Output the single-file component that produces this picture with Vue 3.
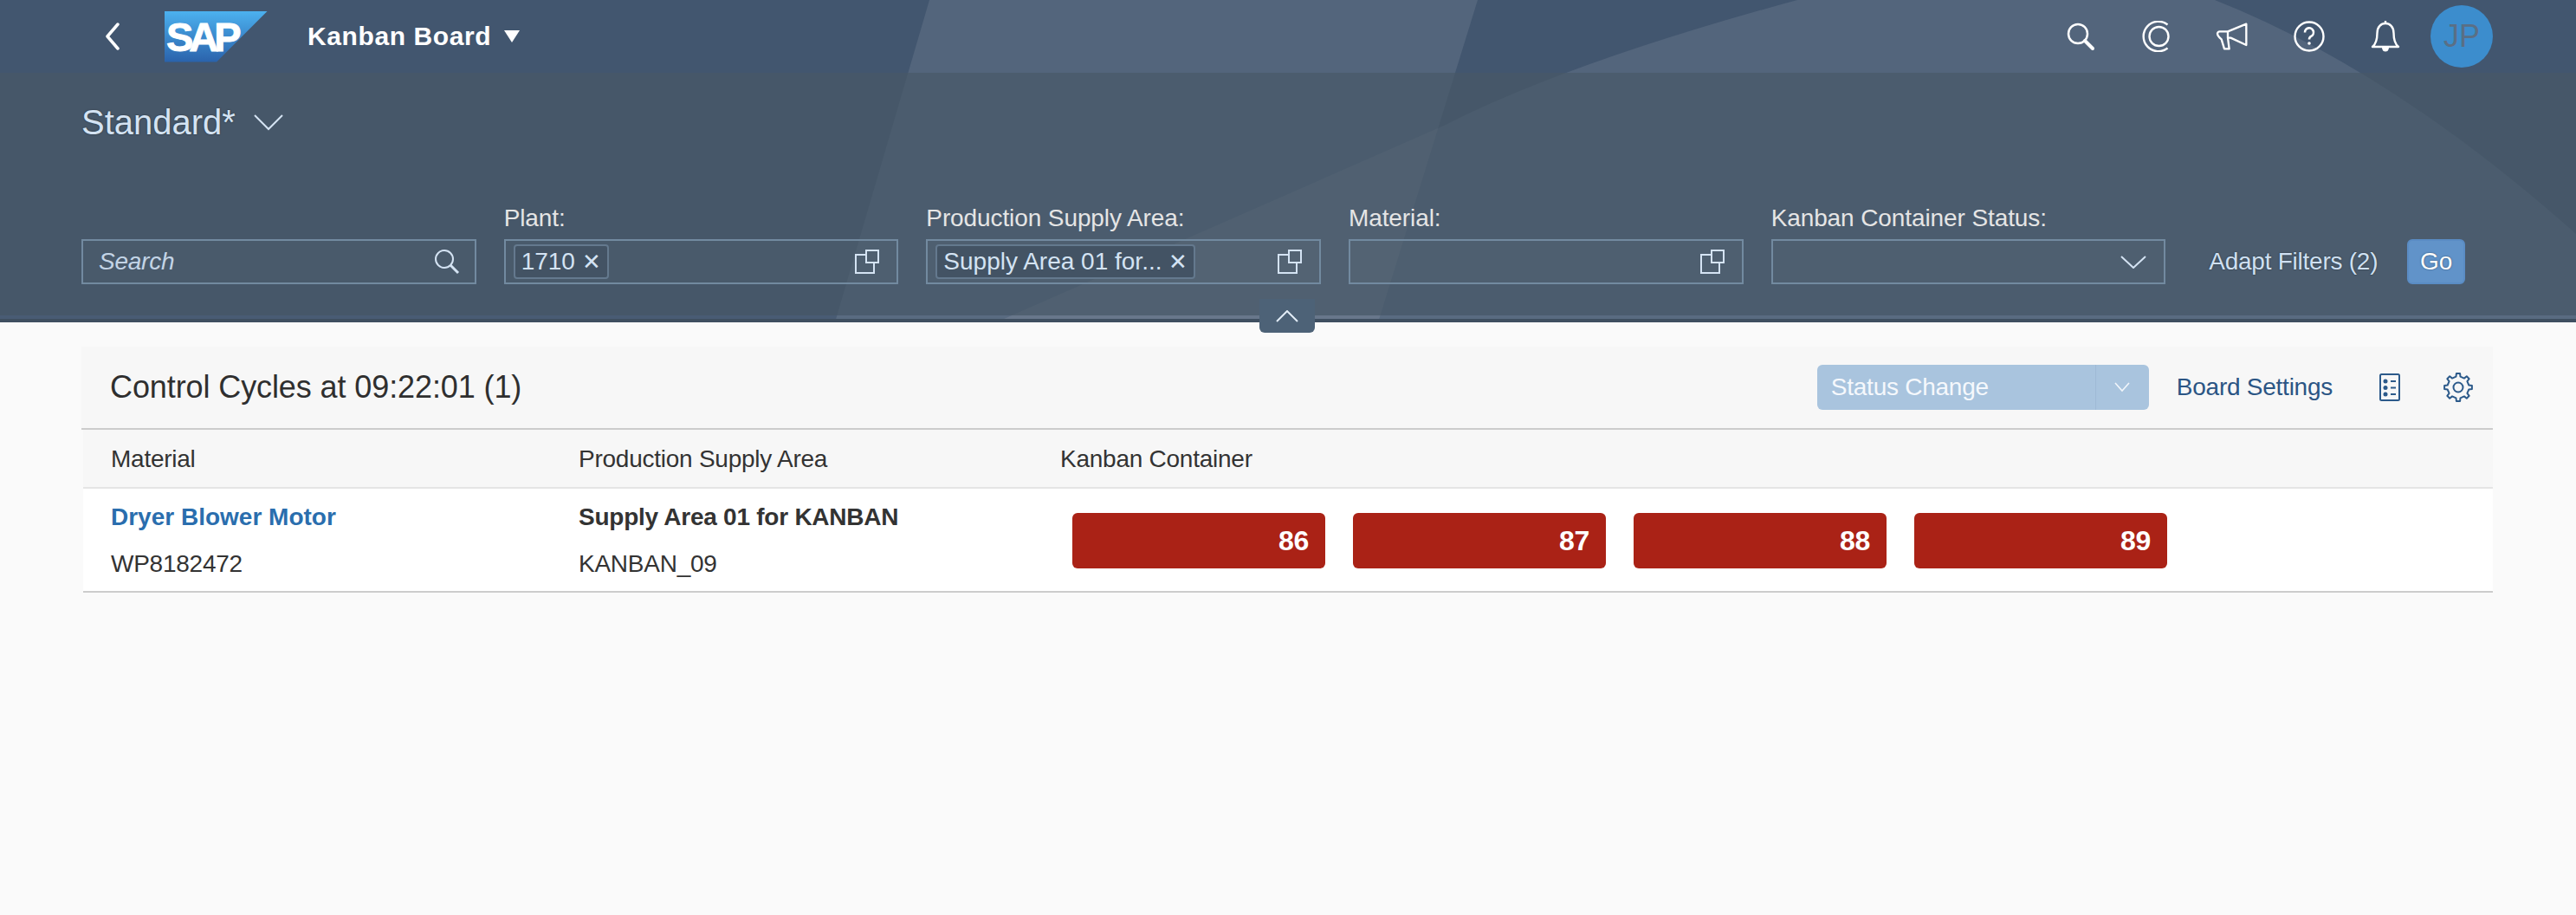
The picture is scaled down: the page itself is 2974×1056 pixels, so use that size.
<script setup>
const filters = [
  { label: 'Plant:', token: '1710' },
  { label: 'Production Supply Area:', token: 'Supply Area 01 for...' },
  { label: 'Material:', token: '' },
]

const rows = [
  {
    material: 'Dryer Blower Motor',
    materialId: 'WP8182472',
    area: 'Supply Area 01 for KANBAN',
    areaId: 'KANBAN_09',
    containers: [86, 87, 88, 89],
  },
]

// gear outline, 8 teeth
const gearPath = (() => {
  const pts = []
  for (let i = 0; i < 8; i++) {
    const a = (i * Math.PI) / 4 - Math.PI / 2
    const step = [[-0.2, 12.5], [-0.13, 16], [0.13, 16], [0.2, 12.5]]
    for (const [da, r] of step) {
      pts.push((17 + r * Math.cos(a + da)).toFixed(1) + ' ' + (17 + r * Math.sin(a + da)).toFixed(1))
    }
  }
  return 'M' + pts.join('L') + 'Z'
})()
</script>

<template>
  <div class="page">
    <header class="top">
      <svg class="deco" viewBox="0 0 2974 372" preserveAspectRatio="none" aria-hidden="true">
        <path d="M1073 0H1706L1591 372H964Z" fill="#fff" opacity="0.09" />
        <path d="M1150 372L1667 145Q1810 72 2075 0H2557Q2760 80 2974 270V372Z" fill="#fff" opacity="0.09" />
      </svg>

      <div class="shell">
        <button class="back">
          <svg width="20" height="32" viewBox="0 0 20 32"><path d="M16 2L4 16L16 30" fill="none" stroke="#fff" stroke-width="3.500" stroke-linecap="round" stroke-linejoin="round" /></svg>
        </button>
        <div class="logo"><span>SAP</span></div>
        <div class="app-title">Kanban Board</div>
        <svg class="app-caret" width="18" height="14" viewBox="0 0 18 14"><path d="M0 0H18L9 14Z" fill="#fff" /></svg>

        <div class="shell-actions">
          <button class="shell-btn">
            <svg width="36" height="36" viewBox="0 0 36 36" fill="none" stroke="#fff"><circle cx="15" cy="15" r="11" stroke-width="2.5" /><path d="M23 23L32 32" stroke-width="4" stroke-linecap="round" /></svg>
          </button>
          <button class="shell-btn">
            <svg width="40" height="36" viewBox="0 0 40 36" fill="none" stroke="#fff" stroke-width="2.4"><circle cx="22.5" cy="18" r="11" /><path d="M32.5 4.5A17.2 17.2 0 1 0 32.5 31.5" /></svg>
          </button>
          <button class="shell-btn">
            <svg width="40" height="40" viewBox="598 60 120 120" fill="none" stroke="#fff" stroke-width="7" stroke-linejoin="round"><path d="M612 103H640L704 77V150L650 125H640L645 163H628L618 130Q604 118 604 110Q606 103 612 103Z" /><path d="M640 103V125" /></svg>
          </button>
          <button class="shell-btn">
            <svg width="36" height="36" viewBox="0 0 36 36" fill="none" stroke="#fff" stroke-width="2.4"><circle cx="18" cy="18" r="16.5" /><path d="M13 13.5A5 5 0 1 1 20.2 17.8C18.6 18.6 18 19.4 18 21.5" stroke-width="2.6" /><circle cx="18" cy="26" r="1.8" fill="#fff" stroke="none" /></svg>
          </button>
          <button class="shell-btn">
            <svg width="34" height="38" viewBox="0 0 34 38" fill="none" stroke="#fff" stroke-width="2.4" stroke-linejoin="round"><path d="M2 31C7 27 7.500 21 7.500 15C7.500 8 12 4 17 4C22 4 26.500 8 26.500 15C26.500 21 27 27 32 31Z" /><path d="M17 1V4" /><path d="M13 32A4 4.500 0 0 0 21 32Z" fill="#fff" stroke="none" /></svg>
          </button>
          <button class="shell-btn">
            <span class="avatar">JP</span>
          </button>
        </div>
      </div>

      <div class="sub">
        <div class="variant">
          <span>Standard*</span>
          <svg width="34" height="20" viewBox="0 0 34 20"><path d="M1 2L17 18L33 2" fill="none" stroke="#d4e3f3" stroke-width="2" /></svg>
        </div>

        <div class="filterbar">
          <div class="field-wrap">
            <div class="field search">
              <span class="placeholder">Search</span>
              <svg width="30" height="30" viewBox="0 0 30 30" fill="none" stroke="#d4e3f3"><circle cx="12" cy="12" r="10" stroke-width="2" /><path d="M19 19L28 28" stroke-width="3" /></svg>
            </div>
          </div>

          <div v-for="f in filters" :key="f.label" class="field-wrap">
            <label>{{ f.label }}</label>
            <div class="field">
              <span v-if="f.token" class="token">{{ f.token }}<i>✕</i></span>
              <svg class="vh" width="28" height="28" viewBox="0 0 28 28" fill="none" stroke="#d4e3f3" stroke-width="2"><rect x="13" y="1" width="14" height="14" /><path d="M13 6H1V27H22V15" /></svg>
            </div>
          </div>

          <div class="field-wrap">
            <label>Kanban Container Status:</label>
            <div class="field">
              <svg class="vh" width="30" height="15" viewBox="0 0 30 15"><path d="M1 1L15 14L29 1" fill="none" stroke="#d4e3f3" stroke-width="2" /></svg>
            </div>
          </div>

          <span class="adapt">Adapt Filters (2)</span>
          <button class="go">Go</button>
        </div>
      </div>
      <div class="edge"></div>
    </header>

    <button class="collapse">
      <svg width="26" height="14" viewBox="0 0 26 14"><path d="M1 13L13 1L25 13" fill="none" stroke="#e3edf7" stroke-width="2" /></svg>
    </button>

    <main class="content">
      <div class="toolbar">
        <h2>Control Cycles at 09:22:01 (1)</h2>
        <div class="status-btn">
          <span class="status-label">Status Change</span>
          <span class="status-arrow">
            <svg width="18" height="12" viewBox="0 0 18 12"><path d="M1 1L9 10L17 1" fill="none" stroke="#f2f6fb" stroke-width="1.600" /></svg>
          </span>
        </div>
        <a class="board-settings">Board Settings</a>
        <svg class="tb-icon" width="24" height="32" viewBox="0 0 24 32" fill="none" stroke="#2c5a8a" stroke-width="2">
          <rect x="1" y="1" width="22" height="30" rx="1.500" />
          <circle cx="7" cy="9" r="2.500" fill="#2c5a8a" stroke="none" />
          <circle cx="7" cy="16.500" r="2.500" fill="#2c5a8a" stroke="none" />
          <circle cx="7" cy="24" r="2.500" fill="#2c5a8a" stroke="none" />
          <path d="M13 9H19M13 16.500H19M13 24H19" />
        </svg>
        <svg class="tb-gear" width="34" height="34" viewBox="0 0 34 34" fill="none" stroke="#2c5a8a" stroke-width="2" stroke-linejoin="round">
          <path :d="gearPath" />
          <circle cx="17" cy="17" r="5.500" />
        </svg>
      </div>

      <div class="table">
        <div class="thead">
          <div>Material</div>
          <div>Production Supply Area</div>
          <div>Kanban Container</div>
        </div>
        <div v-for="row in rows" :key="row.materialId" class="trow">
          <div class="cell">
            <a class="link">{{ row.material }}</a>
            <span>{{ row.materialId }}</span>
          </div>
          <div class="cell">
            <b>{{ row.area }}</b>
            <span>{{ row.areaId }}</span>
          </div>
          <div class="cards">
            <div v-for="c in row.containers" :key="c" class="card">{{ c }}</div>
          </div>
        </div>
      </div>
    </main>
  </div>
</template>

<style scoped>
.page {
  position: relative;
  min-height: 1056px;
  background: #fafafa;
  font-family: "Liberation Sans", Arial, sans-serif;
  font-size: 28px;
  letter-spacing: -0.25px;
  color: #333;
}

button {
  font-family: inherit;
  border: 0;
  padding: 0;
  background: none;
}

.top {
  position: relative;
  height: 372px;
  background: #42566f;
  overflow: hidden;
}

.deco {
  position: absolute;
  left: 0;
  top: 0;
  width: 100%;
  height: 100%;
}

.shell {
  position: relative;
  height: 84px;
  display: flex;
  align-items: center;
  padding: 0 88px 0 86px;
}

.back {
  width: 88px;
  height: 84px;
  display: flex;
  align-items: center;
  justify-content: center;
}

.logo {
  width: 119px;
  height: 59px;
  margin-left: 16px;
  background: linear-gradient(#4cb1ef, #2a62ab);
  clip-path: polygon(0 0, 100% 0, 50.500% 100%, 0 100%);
  color: #fff;
  font-weight: 700;
  font-size: 47px;
  letter-spacing: -5px;
  line-height: 59px;
  -webkit-text-stroke: 1px #fff;
}

.logo span {
  display: block;
  margin-left: 2px;
}

.app-title {
  margin-left: 46px;
  color: #fff;
  font-size: 30px;
  font-weight: 700;
  letter-spacing: 0.6px;
}

.app-caret {
  margin-left: 15px;
}

.shell-actions {
  margin-left: auto;
  display: flex;
}

.shell-btn {
  width: 88px;
  height: 84px;
  display: flex;
  align-items: center;
  justify-content: center;
}

.avatar {
  width: 72px;
  height: 72px;
  border-radius: 50%;
  background: #3c8dcd;
  color: #5a6f85;
  font-size: 36px;
  line-height: 72px;
  text-align: center;
}

.sub {
  position: relative;
  height: 280px;
  padding: 29px 0 0 94px;
  box-sizing: border-box;
  background: rgba(72, 89, 103, 0.68);
}

.variant {
  display: flex;
  align-items: center;
  gap: 21px;
  height: 56px;
  color: #d4e3f3;
  font-size: 40px;
  letter-spacing: 0;
  text-shadow: 0 0 2px rgba(0, 0, 0, 0.5);
}

.filterbar {
  margin-top: 66px;
  display: flex;
  align-items: flex-end;
  gap: 32px;
}

.field-wrap {
  width: 455.670px;
  flex: none;
}

label {
  display: block;
  height: 41px;
  line-height: 34px;
  letter-spacing: -0.1px;
  color: #e5e5e5;
}

.field {
  height: 52px;
  box-sizing: border-box;
  border: 2px solid #728aa0;
  background: rgba(255, 255, 255, 0.02);
  display: flex;
  align-items: center;
  padding: 0 6px 0 9px;
}

.search {
  padding: 0 17px 0 18px;
  justify-content: space-between;
}

.placeholder {
  font-style: italic;
  color: #c3d4e6;
}

.token {
  height: 40px;
  box-sizing: border-box;
  padding: 0 7px;
  border: 2px solid #64798e;
  border-radius: 4px;
  background: #435364;
  color: #d4e3f3;
  line-height: 36px;
  letter-spacing: 0;
  display: flex;
  gap: 8px;
}

.token i {
  font-style: normal;
  font-size: 26px;
}

.vh {
  margin-left: auto;
  margin-right: 14px;
}

.adapt {
  margin-left: 18px;
  margin-right: 2px;
  color: #cfe0f2;
  height: 52px;
  line-height: 52px;
  text-shadow: 0 0 2px rgba(0, 0, 0, 0.5);
}

.go {
  width: 67px;
  height: 52px;
  box-sizing: border-box;
  border: 2px solid #5a8cc4;
  border-radius: 6px;
  background: #6193c9;
  color: #fff;
  font-size: 28px;
  text-shadow: 0 0 2px rgba(0, 0, 0, 0.5);
}

.edge {
  position: absolute;
  left: 0;
  right: 0;
  bottom: 0;
  height: 4px;
  background: #3f4f60;
  box-shadow: 0 -4px 0 rgba(255, 255, 255, 0.04);
}

.collapse {
  position: absolute;
  left: 1454px;
  top: 345px;
  width: 64px;
  height: 39px;
  border-radius: 0 0 6px 6px;
  background: #4d6277;
  display: flex;
  align-items: center;
  justify-content: center;
}

.content {
  padding: 28px 96px 0 94px;
}

.toolbar {
  height: 96px;
  box-sizing: border-box;
  border-bottom: 2px solid #ccc;
  background: #f7f7f7;
  display: flex;
  align-items: center;
  padding: 0 23px 0 33px;
}

h2 {
  margin: 0 auto 0 0;
  font-size: 36px;
  font-weight: 400;
  letter-spacing: -0.1px;
  color: #2f2f2f;
}

.status-btn {
  width: 383px;
  height: 52px;
  border-radius: 6px;
  background: #a9c4de;
  color: #f5f8fc;
  display: flex;
  align-items: center;
}

.status-label {
  flex: 1;
  padding-left: 16px;
}

.status-arrow {
  width: 62px;
  height: 100%;
  box-sizing: border-box;
  border-left: 1px solid #9fbad5;
  display: flex;
  align-items: center;
  justify-content: center;
}

.board-settings {
  margin-left: 32px;
  color: #2b5584;
}

.tb-icon {
  margin-left: 54px;
}

.tb-gear {
  margin-left: 50px;
}

.table {
  margin-left: 2px;
}

.thead,
.trow {
  display: grid;
  grid-template-columns: 540px 556px 1fr;
  padding-left: 32px;
}

.thead {
  height: 68px;
  box-sizing: border-box;
  border-bottom: 2px solid #e5e5e5;
  background: #f7f7f7;
  line-height: 68px;
}

.trow {
  height: 120px;
  box-sizing: border-box;
  border-bottom: 2px solid #ccc;
  background: #fff;
}

.cell {
  display: flex;
  flex-direction: column;
  padding-top: 17px;
  gap: 22px;
  line-height: 32px;
}

.link {
  color: #2a6eae;
  font-weight: 700;
  letter-spacing: 0;
}

.cards {
  display: flex;
  gap: 32px;
  padding: 28px 0 0 14px;
}

.card {
  width: 292px;
  height: 64px;
  box-sizing: border-box;
  border-radius: 6px;
  background: #aa2216;
  color: #fff;
  font-size: 32px;
  font-weight: 700;
  line-height: 64px;
  text-align: right;
  padding-right: 19px;
}
</style>
